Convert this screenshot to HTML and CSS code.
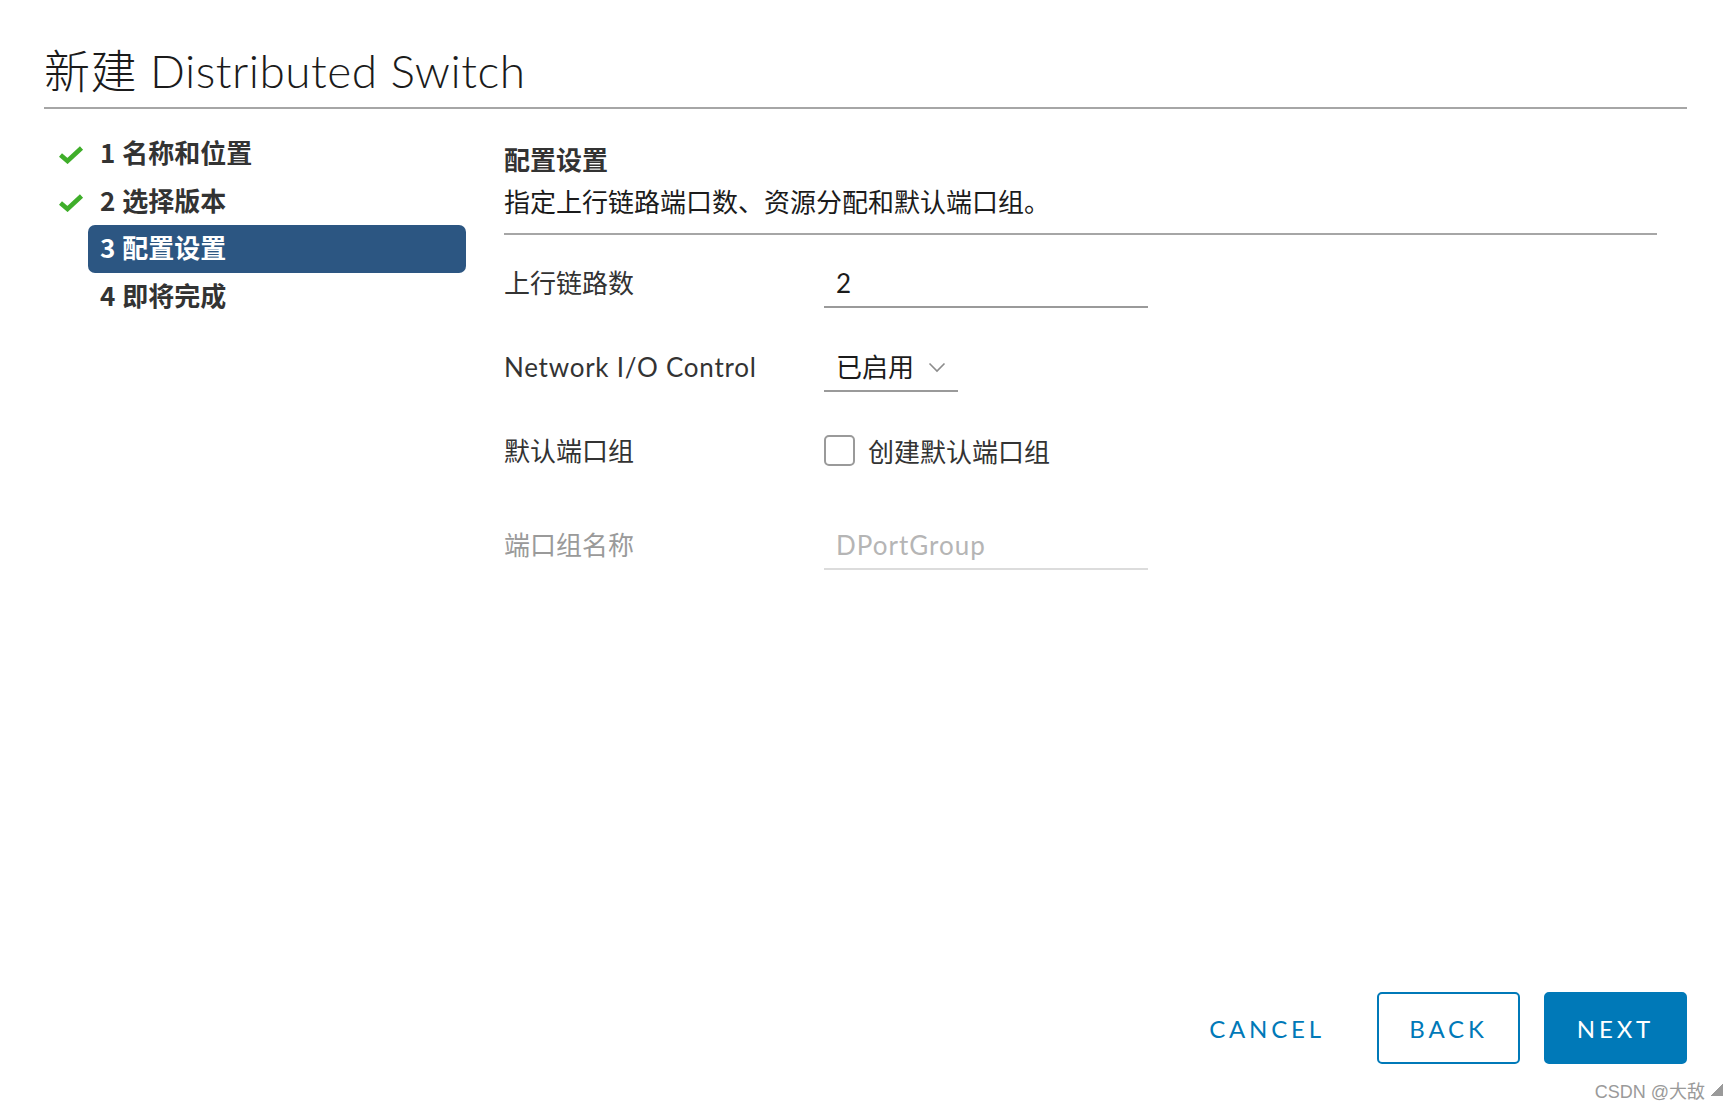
FILE: index.html
```html
<!DOCTYPE html>
<html lang="zh-CN">
<head>
    <meta charset="UTF-8">
    <meta name="viewport" content="width=device-width, initial-scale=1.0">
    <title>新建 Distributed Switch</title>
    <link rel="stylesheet" href="styles.css">
</head>
<body>
    <div class="modal">
        <header class="modal-header">
            <h1>新建 Distributed Switch</h1>
        </header>
        <div class="modal-body">
            <ul class="steps">
                <li class="step done">
                    <span class="mark">
                        <svg width="26" height="18" viewBox="0 0 26 18"><path d="M2.5 9 L9.5 15 L23.5 2" fill="none" stroke="#3fae2a" stroke-width="4.6" stroke-linejoin="miter"/></svg>
                    </span>
                    <span class="label">1 名称和位置</span>
                </li>
                <li class="step done">
                    <span class="mark">
                        <svg width="26" height="18" viewBox="0 0 26 18"><path d="M2.5 9 L9.5 15 L23.5 2" fill="none" stroke="#3fae2a" stroke-width="4.6" stroke-linejoin="miter"/></svg>
                    </span>
                    <span class="label">2 选择版本</span>
                </li>
                <li class="step active">
                    <span class="mark"></span>
                    <span class="label">3 配置设置</span>
                </li>
                <li class="step">
                    <span class="mark"></span>
                    <span class="label">4 即将完成</span>
                </li>
            </ul>
            <section class="content">
                <div class="content-head">
                    <h2>配置设置</h2>
                    <p>指定上行链路端口数、资源分配和默认端口组。</p>
                </div>
                <div class="form">
                    <div class="row row-1">
                        <label class="field-label">上行链路数</label>
                        <div class="input">2</div>
                    </div>
                    <div class="row row-2">
                        <label class="field-label latin">Network I/O Control</label>
                        <div class="select">
                            <span>已启用</span>
                            <svg width="18" height="11" viewBox="0 0 18 11"><path d="M1.5 1.5 L9 9 L16.5 1.5" fill="none" stroke="#8c8c8c" stroke-width="1.6"/></svg>
                        </div>
                    </div>
                    <div class="row row-3">
                        <label class="field-label">默认端口组</label>
                        <div class="checkbox">
                            <span class="box"></span>
                            <span>创建默认端口组</span>
                        </div>
                    </div>
                    <div class="row row-4 disabled">
                        <label class="field-label">端口组名称</label>
                        <div class="input placeholder">DPortGroup</div>
                    </div>
                </div>
            </section>
        </div>
        <footer class="modal-footer">
            <button class="btn btn-link">CANCEL</button>
            <button class="btn btn-outline">BACK</button>
            <button class="btn btn-primary">NEXT</button>
        </footer>
        <div class="watermark">CSDN @大敌<span class="grip"></span></div>
    </div>
</body>
</html>
```

FILE: styles.css
```css
html, body {
    margin: 0;
    padding: 0;
    background: #fff;
}
body {
    font-family: Lato, "Noto Sans CJK SC", sans-serif;
    color: #313131;
}
.modal {
    height: 1111px;
    display: flex;
    flex-direction: column;
    overflow: hidden;
}
.modal-header {
    margin: 0 36px 0 44px;
    padding: 40px 0 5px;
    border-bottom: 2px solid #a6a6a6;
}
.modal-header h1 {
    margin: 0;
    font-size: 46px;
    line-height: 62px;
    font-weight: 300;
    letter-spacing: 0.5px;
    color: #1b1b1b;
}
.modal-body {
    flex: 1;
    display: flex;
}
.steps {
    list-style: none;
    margin: 0;
    padding: 21px 0 0 0;
    width: 504px;
    flex: none;
}
.step {
    display: flex;
    height: 47.7px;
}
.step .mark {
    width: 88px;
    flex: none;
    display: flex;
    align-items: center;
    padding: 2px 0 0 58px;
    box-sizing: border-box;
}
.step .label {
    width: 378px;
    padding-left: 12px;
    padding-bottom: 3px;
    box-sizing: border-box;
    font-family: "Noto Sans CJK SC", sans-serif;
    font-weight: 700;
    font-size: 26px;
    word-spacing: 1px;
    line-height: 44.7px;
    color: #333;
    border-radius: 7px;
}
.step.active .label {
    background: #2c5682;
    color: #fff;
}
.content {
    flex: none;
    width: 1153px;
}
.content-head {
    padding-top: 32px;
    border-bottom: 2px solid #a6a6a6;
    padding-bottom: 14px;
}
.content-head h2 {
    margin: 0;
    font-family: "Noto Sans CJK SC", sans-serif;
    font-size: 26px;
    font-weight: 700;
    line-height: 36px;
    color: #333;
}
.content-head p {
    margin: 6px 0 0;
    font-family: "Noto Sans CJK SC", sans-serif;
    font-size: 26px;
    line-height: 36px;
    color: #1b1b1b;
}
.form {
    padding-top: 25px;
}
.row {
    display: flex;
    align-items: center;
    height: 48px;
}
.row-2 { margin-top: 36px; }
.row-3 { margin-top: 36px; }
.row-4 { margin-top: 46px; }
.field-label {
    width: 320px;
    padding-bottom: 5px;
    font-size: 26px;
    color: #333;
}
.field-label.latin {
    padding-bottom: 2px;
    letter-spacing: 0.75px;
}
.row.disabled .field-label {
    color: #9a9a9a;
}
.input {
    width: 324px;
    height: 48px;
    box-sizing: border-box;
    padding: 0 12px;
    line-height: 46px;
    font-size: 26px;
    letter-spacing: 1px;
    color: #1b1b1b;
    border-bottom: 2px solid #9a9a9a;
}
.input.placeholder {
    color: #b5b5b5;
    border-bottom-color: #dcdcdc;
}
.select {
    width: 134px;
    height: 48px;
    box-sizing: border-box;
    padding: 0 12px 4px;
    display: flex;
    align-items: center;
    justify-content: space-between;
    font-size: 26px;
    color: #1b1b1b;
    border-bottom: 2px solid #9a9a9a;
}
.select svg {
    margin-top: 4px;
}
.checkbox {
    display: flex;
    align-items: center;
    padding-bottom: 3px;
    font-size: 26px;
    color: #333;
}
.checkbox .box {
    width: 31px;
    height: 31px;
    box-sizing: border-box;
    border: 2px solid #9a9a9a;
    border-radius: 5px;
    margin-right: 13px;
}
.modal-footer {
    display: flex;
    justify-content: flex-end;
    gap: 24px;
    padding-right: 36px;
}
.btn {
    min-width: 143px;
    height: 72px;
    box-sizing: border-box;
    padding: 0 22px;
    font-family: Lato, sans-serif;
    font-size: 24px;
    letter-spacing: 0.16em;
    font-weight: 400;
    border-radius: 5px;
    border: 2px solid #0079b8;
    background: #fff;
    color: #0079b8;
    cursor: pointer;
}
.btn-link {
    border-color: transparent;
    margin-right: 4px;
}
.btn-primary {
    background: #0079b8;
    color: #fff;
}
.watermark {
    display: flex;
    align-items: center;
    justify-content: flex-end;
    height: 47px;
    padding-top: 4px;
    box-sizing: border-box;
    font-family: "Liberation Sans", "Noto Sans CJK SC", sans-serif;
    font-size: 18px;
    color: #9a9a9a;
}
.grip {
    width: 12px;
    height: 12px;
    margin-left: 6px;
    background: linear-gradient(135deg, transparent 50%, #9a9a9a 50%);
}
```
